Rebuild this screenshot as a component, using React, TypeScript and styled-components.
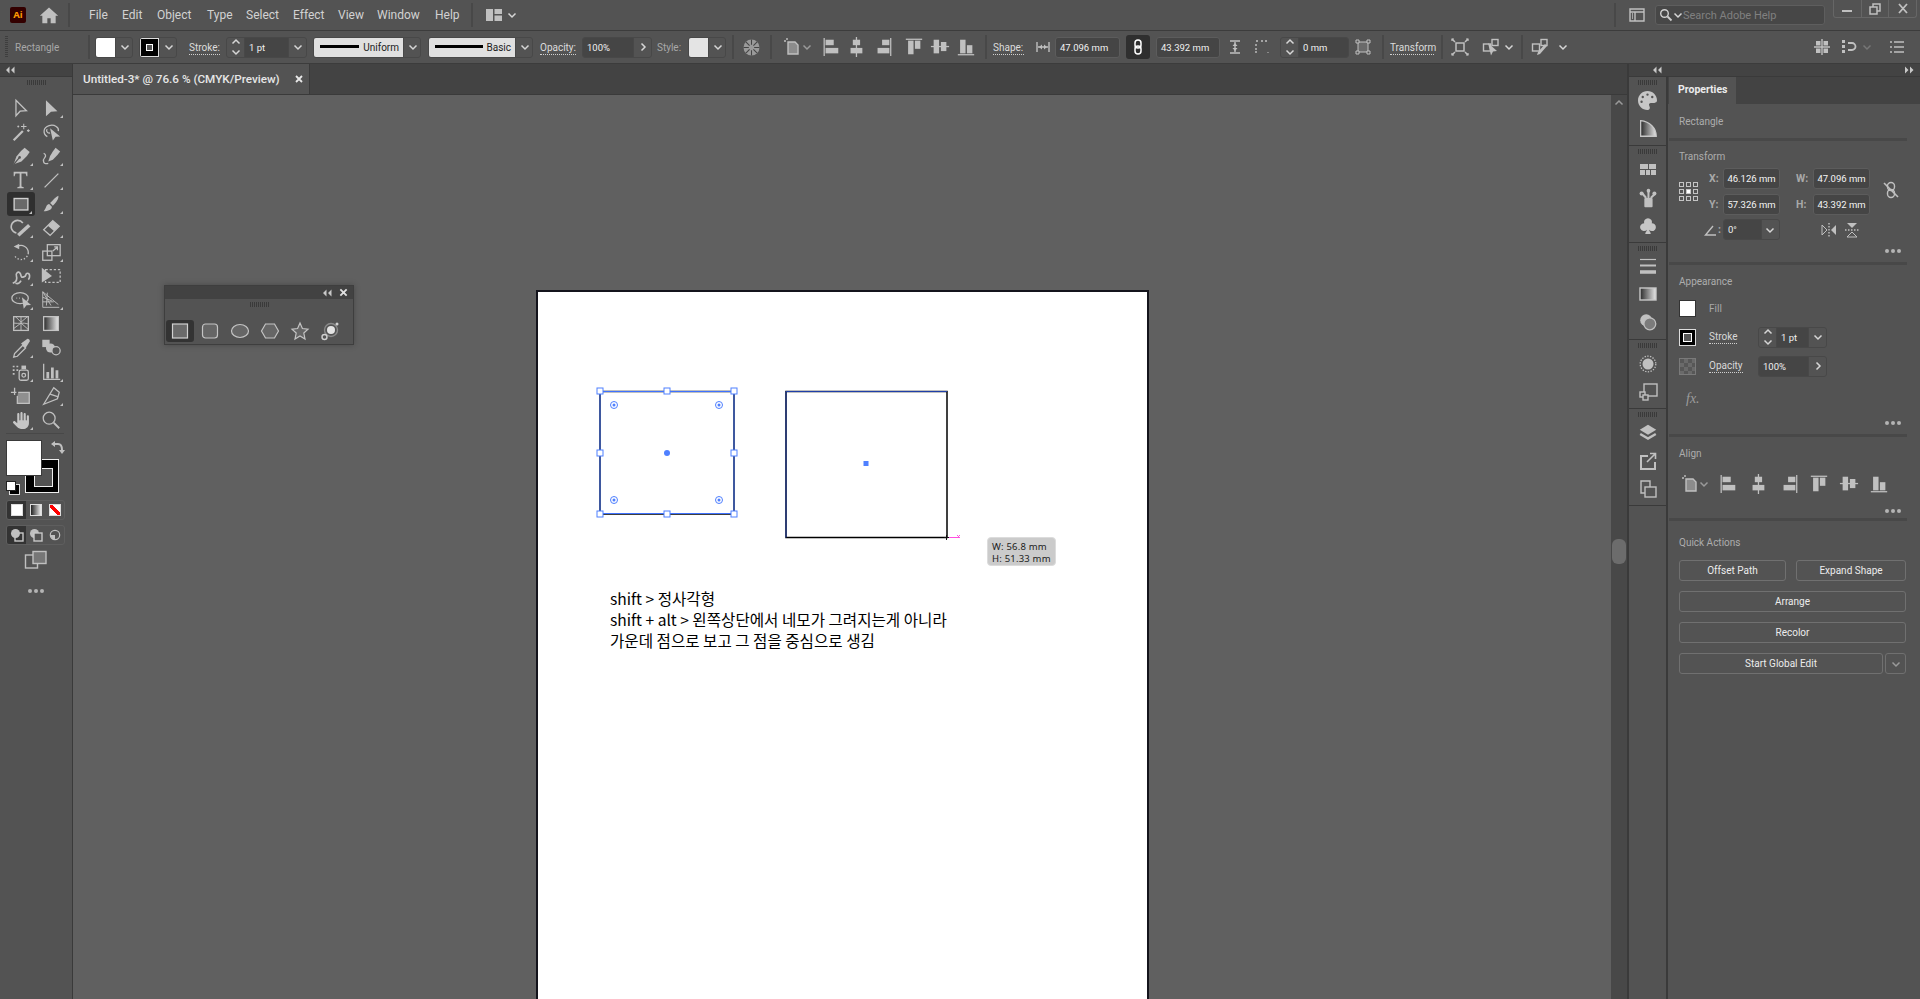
import React from "react";
import styled, { createGlobalStyle, css } from "styled-components";
import { FaHand, FaPalette } from "react-icons/fa6";
import { BsSuitClubFill } from "react-icons/bs";

const Global = createGlobalStyle`
  html, body { margin: 0; height: 999px; overflow: hidden; background: #535353; }
  #root { height: 999px; }
  * { box-sizing: border-box; }
`;

type Off = { $ml?: number };
const offset = css<Off>`margin-left: ${(p) => p.$ml ?? 0}px;`;

const Shell = styled.div`
  width: 1920px; height: 999px; display: flex; flex-direction: column;
  font-family: Roboto, "Noto Sans", "Liberation Sans", sans-serif; color: #c8c8c8; background: #535353; overflow: hidden;
`;

/* ---------- glyph ---------- */
const Glyph = styled.svg<{ $c?: string }>`
  display: block; flex: none; fill: none; stroke: currentColor; stroke-width: 1.4; color: ${(p) => p.$c ?? "#c0c0c0"};
`;
const Ico = ({ s = 24, vb = "0 0 24 24", c, children }: { s?: number; vb?: string; c?: string; children: React.ReactNode }) => (
  <Glyph width={s} height={s} viewBox={vb} $c={c}>{children}</Glyph>
);
const F = { fill: "currentColor", stroke: "none" } as const;

const Chevron = ({ c = "#d6d6d6", up, right }: { c?: string; up?: boolean; right?: boolean }) => (
  <Glyph width="10" height="10" viewBox="0 0 10 10" $c={c} style={{ strokeWidth: 1.5 }}>
    <path d={up ? "M1.5 6.5 5 3l3.5 3.5" : right ? "M3.5 1.5 7 5 3.5 8.5" : "M1.5 3.5 5 7l3.5-3.5"} />
  </Glyph>
);
const DoubleArrow = ({ right }: { right?: boolean }) => (
  <Ico s={10} vb="0 0 10 8" c="#c8c8c8">
    <path d={right ? "M1 .5 4.500 4 1 7.500zM6 .5 9.500 4 6 7.500z" : "M4.500.5 1 4l3.500 3.500zM9.500.5 6 4l3.500 3.500z"} {...F} />
  </Ico>
);

/* ---------- menu bar ---------- */
const MenuBar = styled.div`
  height: 31px; flex: none; display: flex; align-items: center; background: #535353; border-bottom: 1px solid #3c3c3c;
  position: relative;
`;
const AiLogo = styled.div`
  width: 16px; height: 16px; margin-left: 10px; background: #330000; border-radius: 2px; color: #ff9a00;
  font: 700 9.5px/16px "Noto Sans", sans-serif; text-align: center; flex: none;
`;
const HomeSlot = styled.div<Off>`${offset} width: 20px; flex: none;`;
const VBar = styled.div<Off & { $h?: number }>`
  ${offset} width: 2px; height: ${(p) => p.$h ?? 24}px; background: #484848; flex: none;
`;
const MenuList = styled.div`margin-left: 19px; display: flex; flex: none;`;
const MenuItem = styled.div<{ $w: number }>`
  width: ${(p) => p.$w}px; flex: none; font-size: 12px; color: #d2d2d2; white-space: nowrap; line-height: 16px;
`;
const IconSlot = styled.div<Off & { $w?: number }>`
  ${offset} width: ${(p) => p.$w ?? 16}px; flex: none; display: flex; align-items: center; justify-content: center;
`;
const SearchBox = styled.div<Off>`
  ${offset} width: 170px; height: 20px; flex: none; background: #474747; border: 1px solid #5e5e5e; border-radius: 3px;
  display: flex; align-items: center; gap: 0; padding-left: 3px; font-size: 11px; color: #808080; white-space: nowrap;
`;
const WindowButtons = styled.div`
  position: absolute; right: 3px; top: 0; width: 84px; height: 18px; display: flex;
  border: 1px solid #666; border-top: 0; border-radius: 0 0 3px 3px;
`;
const WindowButton = styled.div<{ $sep?: boolean }>`
  flex: 1; display: flex; align-items: center; justify-content: center;
  ${(p) => p.$sep && "border-left: 1px solid #666;"}
`;

/* ---------- control bar ---------- */
const ControlBar = styled.div`
  height: 33px; flex: none; display: flex; align-items: center; background: #535353; border-bottom: 1px solid #3c3c3c;
`;
const Grip = styled.div<Off>`
  ${offset} width: 3px; height: 22px; flex: none;
  background: repeating-linear-gradient(to bottom, #3e3e3e 0 1px, transparent 1px 2px);
`;
const PlainLabel = styled.div<Off & { $w: number }>`
  ${offset} width: ${(p) => p.$w}px; flex: none; font-size: 10px; color: #a8a8a8; white-space: nowrap; padding-top: 1px;
`;
const DottedLabel = styled.div<Off & { $w?: number; $muted?: boolean }>`
  ${offset} ${(p) => p.$w ? `width: ${p.$w}px;` : ""} flex: none; font-size: 10px; line-height: 13px; color: ${(p) => p.$muted ? "#a8a8a8" : "#dcdcdc"}; white-space: nowrap; margin-top: 1px;
  ${(p) => !p.$muted && "border-bottom: 1px dotted #d0d0d0;"}
`;
const Combo = styled.div<Off & { $w: number }>`
  ${offset} width: ${(p) => p.$w}px; height: 21px; flex: none; display: flex; border: 1px solid #484848; border-radius: 3px; overflow: hidden;
`;
const ChevCell = styled.div<{ $w?: number }>`
  width: ${(p) => p.$w ?? 18}px; flex: none; display: flex; align-items: center; justify-content: center;
  border-left: 1px solid #484848;
`;
const StepCell = styled.div`
  width: 18px; flex: none; display: flex; flex-direction: column; align-items: center; justify-content: center;
  border-right: 1px solid #484848; gap: 0;
`;
const ValueCell = styled.div`
  flex: 1; min-width: 0; background: #454545; color: #f0f0f0; font-size: 9.5px; line-height: 19px; padding-left: 4px; white-space: nowrap;
`;
const Swatch = styled.div<{ $bg?: string; $w?: number }>`
  width: ${(p) => p.$w ?? 19}px; flex: none; background: ${(p) => p.$bg ?? "#fff"};
`;
const StrokeSwatch = styled.div`
  width: 19px; flex: none; background: #000; border: 1px solid #ddd; display: flex; align-items: center; justify-content: center;
`;
const StrokeInner = styled.div`
  width: 7px; height: 7px; border: 1.5px solid #fff; background: #555;
`;
const LinePreview = styled.div<{ $w: number; $t: number }>`
  width: ${(p) => p.$w}px; flex: none; background: #e0e0e0; display: flex; align-items: center; padding: 0 4px 0 6px; gap: 4px;
  color: #1c1c1c; font-size: 10px; white-space: nowrap;
  &::before { content: ""; flex: 1; height: ${(p) => p.$t}px; background: #000; margin-top: -1px; }
`;
const FieldBox = styled.div<Off & { $w: number }>`
  ${offset} width: ${(p) => p.$w}px; height: 21px; flex: none; background: #454545; border: 1px solid #5c5c5c; border-radius: 3px;
  font-size: 9.5px; line-height: 19px; color: #f0f0f0; padding-left: 4px; white-space: nowrap;
`;
const LinkButton = styled.div<Off>`
  ${offset} width: 24px; height: 24px; flex: none; background: #2f2f2f; border-radius: 3px; display: flex; align-items: center; justify-content: center;
`;
const RightGroup = styled.div`margin-left: auto; padding-right: 15px; display: flex; align-items: center;`;

/* ---------- workspace ---------- */
const Workspace = styled.div`flex: 1; min-height: 0; display: flex;`;
const CollapseStrip = styled.div`
  height: 13px; flex: none; background: #434343; border-bottom: 1px solid #3a3a3a; display: flex; align-items: center; padding: 0 6px 0 5px;
  justify-content: space-between;
`;
const DockArrow = styled.div`margin-left: 18px;`;
const ToolsColumn = styled.div`
  width: 73px; flex: none; display: flex; flex-direction: column; border-right: 1px solid #3a3a3a;
`;
const GripRow = styled.div<{ $h?: number }>`
  height: ${(p) => p.$h ?? 19}px; flex: none; display: flex; justify-content: center; padding-top: 3px;
  &::before { content: ""; width: 19px; height: 5px; background: repeating-linear-gradient(to right, #3a3a3a 0 1px, transparent 1px 2px); }
`;
const ToolGrid = styled.div`
  display: grid; grid-template-columns: 30px 30px; grid-auto-rows: 24px; padding-left: 6px;
`;
const Tool = styled.div<{ $active?: boolean; $corner?: boolean }>`
  position: relative; display: flex; align-items: center; justify-content: center; border-radius: 3px;
  ${(p) => p.$active && "background: #2f2f2f; width: 28px; margin-left: 1px;"}
  ${(p) => p.$corner && `&::after { content: ""; position: absolute; right: 3px; bottom: 2px; border-left: 3px solid transparent; border-bottom: 3px solid #c0c0c0; }`}
`;
const ToolSep = styled.div`height: 1px; background: #484848; margin: 1px 8px 6px 6px; flex: none;`;
const ColorWell = styled.div`position: relative; height: 54px; flex: none;`;
const WellStroke = styled.div`
  position: absolute; left: 25px; top: 19px; width: 34px; height: 34px; background: #000; border: 1px solid #eee;
  &::after { content: ""; position: absolute; left: 8px; top: 8px; width: 17px; height: 17px; border: 1px solid #eee; background: #535353; }
`;
const WellFill = styled.div`
  position: absolute; left: 6px; top: 0; width: 36px; height: 36px; background: #fff; border: 1px solid #3a3a3a; z-index: 1;
`;
const WellSwap = styled.div`position: absolute; left: 49px; top: 0; color: #c8c8c8;`;
const WellDefault = styled.div`
  position: absolute; left: 6px; top: 41px; width: 12px; height: 12px;
  &::before { content: ""; position: absolute; left: 3px; top: 3px; width: 9px; height: 9px; background: #000; border: 1px solid #ddd; }
  &::after { content: ""; position: absolute; left: 0; top: 0; width: 8px; height: 8px; background: #fff; border: 1px solid #222; }
`;
const ModeRow = styled.div<{ $mt: number }>`
  margin: ${(p) => p.$mt}px 0 0 6px; width: 59px; height: 20px; flex: none; display: flex; border: 1px solid #5e5e5e; border-radius: 3px; overflow: hidden;
`;
const ModeCell = styled.div<{ $on?: boolean }>`
  flex: 1; display: flex; align-items: center; justify-content: center; ${(p) => p.$on && "background: #333;"}
`;
const ModeSwatch = styled.div<{ $bg: string }>`
  width: 12px; height: 12px; border: 1px solid #ddd; background: ${(p) => p.$bg};
`;
const ScreenButton = styled.div`margin-top: 3px; height: 22px; flex: none; display: flex; justify-content: center;`;
const DotsCenter = styled.div`margin-top: 16px; height: 10px; display: flex; justify-content: center; gap: 2px; align-items: center; flex: none;`;
const Dot = styled.span`width: 4px; height: 4px; border-radius: 50%; background: #b4b4b4;`;

const Center = styled.div`flex: none; width: 1556px; display: flex; flex-direction: column; border-right: 2px solid #3a3a3a;`;
const TabBar = styled.div`height: 31px; flex: none; background: #434343; display: flex; border-bottom: 1px solid #3a3a3a;`;
const DocTab = styled.div`
  width: 237px; background: #535353; display: flex; align-items: center; padding: 0 5px 0 10px; justify-content: space-between;
  font-size: 11.7px; font-weight: 500; color: #e6e6e6; white-space: nowrap; border-right: 1px solid #3a3a3a;
`;
const CanvasRow = styled.div`flex: 1; min-height: 0; display: flex;`;
const Canvas = styled.div`flex: 1; position: relative; background: #606060; overflow: hidden;`;
const ScrollColumn = styled.div`
  width: 16px; flex: none; background: #484848; display: flex; flex-direction: column; align-items: center; padding-top: 3px;
`;
const ScrollThumb = styled.div`margin-top: 431px; width: 14px; height: 25px; border-radius: 6px; background: #6c6c6c;`;

/* floating palette */
const FloatPanel = styled.div`
  position: absolute; left: 91px; top: 190px; width: 190px; height: 60px; background: #535353; border: 1px solid #3e3e3e;
  box-shadow: 0 0 6px rgba(0,0,0,.25); display: flex; flex-direction: column;
`;
const FloatHead = styled.div`
  height: 13px; background: #424242; display: flex; justify-content: flex-end; align-items: center; gap: 7px; padding-right: 5px; flex: none;
`;
const FloatIcons = styled.div`display: flex; align-items: center; height: 22px; margin-top: 1px;`;
const FloatTool = styled.div<{ $on?: boolean }>`
  width: 30px; height: 22px; display: flex; align-items: center; justify-content: center; border-radius: 3px;
  ${(p) => p.$on && "background: #333; width: 28px; margin-left: 1px; margin-right: 1px;"}
`;

/* artboard */
const Artboard = styled.div`
  position: absolute; left: 463px; top: 195px; width: 613px; height: 760px; background: #fff; border: 2px solid #14141c; border-bottom: 0;
`;
const ArtDrawing = styled.svg`position: absolute; left: 0; top: 0; width: 609px; height: 320px;`;
const ArtText = styled.div`
  position: absolute; left: 72px; top: 296px; font: 400 15.6px/21px "Noto Sans CJK KR", "Noto Sans", sans-serif; color: #000; white-space: nowrap;
`;
const SizeTip = styled.div`
  position: absolute; left: 449px; top: 245px; width: 69px; height: 29px; background: #cbcbcb; border-radius: 4px; border: 1px solid #dcdcdc;
  font: 9.5px/11.5px "Noto Sans", sans-serif; color: #1c1c1c; padding: 3px 0 0 4px; white-space: nowrap; letter-spacing: .2px;
`;

/* dock */
const Dock = styled.div`width: 39px; flex: none; display: flex; flex-direction: column; border-right: 2px solid #3a3a3a;`;
const DockGroup = styled.div<{ $h: number }>`
  height: ${(p) => p.$h}px; flex: none; display: flex; flex-direction: column; align-items: center; border-bottom: 1px solid #3a3a3a; gap: 0;
`;
const DockGrip = styled.div<{ $h: number }>`
  height: ${(p) => p.$h}px; flex: none; width: 100%; display: flex; justify-content: center; padding-top: 3px;
  &::before { content: ""; width: 19px; height: 5px; background: repeating-linear-gradient(to right, #3a3a3a 0 1px, transparent 1px 2px); }
`;
const DockIcon = styled.div`height: 28px; flex: none; display: flex; align-items: center; justify-content: center;`;

/* properties */
const RightColumn = styled.div`flex: none; width: 291px; display: flex; flex-direction: column;`;
const RightBody = styled.div`flex: 1; min-height: 0; display: flex;`;
const Props = styled.div`flex: 1; min-width: 0; display: flex; flex-direction: column;`;
const PropsTabs = styled.div`height: 27px; flex: none; background: #434343; display: flex;`;
const PropsTab = styled.div`
  width: 67px; background: #535353; font-size: 10.5px; font-weight: 700; color: #ececec; padding-left: 9px; line-height: 25px; margin-left: 1px;
`;
const Section = styled.div<{ $h: number; $pt?: number }>`
  height: ${(p) => p.$h}px; flex: none; padding: ${(p) => p.$pt ?? 9}px 0 0 11px; position: relative;
`;
const SectionSep = styled.div`height: 3px; width: 238px; margin-left: 1px; background: #484848; flex: none;`;
const Title = styled.div`font-size: 10px; line-height: 14px; color: #adadad; white-space: nowrap;`;
const TransformRow = styled.div`display: flex; margin-top: 4px; align-items: flex-start;`;
const RefCol = styled.div`width: 30px; flex: none; padding-top: 14px;`;
const RefGrid = styled.div`
  width: 19px; height: 19px; display: grid; grid-template-columns: repeat(3, 5px); grid-auto-rows: 5px; gap: 2px;
`;
const RefCell = styled.span<{ $on?: boolean }>`border: 1px solid #c4c4c4; background: ${(p) => p.$on ? "#fff" : "transparent"};`;
const FieldGrid = styled.div`
  display: grid; grid-template-columns: 14px 57px 16px 17px 57px; grid-auto-rows: 21px; row-gap: 5px; align-items: center;
`;
const FieldTag = styled.div`font-size: 10.5px; color: #a9a9a9; font-weight: 700;`;
const PropField = styled.div`
  height: 21px; background: #454545; border: 1px solid #5c5c5c; border-radius: 3px; color: #f4f4f4; font-size: 9.5px; line-height: 19px; text-align: center; white-space: nowrap;
`;
const Blank = styled.div``;
const UnlinkSlot = styled.div`margin: 13px 0 0 12px;`;
const AngleRow = styled.div`display: flex; align-items: center; margin: 4px 0 0 25px; height: 21px;`;
const FlipSlot = styled.div<Off>`${offset} flex: none;`;
const DotsEnd = styled.div<{ $mt: number }>`
  display: flex; gap: 2px; margin: ${(p) => p.$mt}px 0 0 206px; width: 16px; height: 4px;
`;
const SmallDot = styled.span`width: 4px; height: 4px; border-radius: 50%; background: #b4b4b4; flex: none;`;
const AppRow = styled.div<{ $mt: number }>`display: flex; align-items: center; margin-top: ${(p) => p.$mt}px; height: 20px;`;
const AppSwatch = styled.div`
  width: 17px; height: 17px; flex: none; background: #fff; border: 1px solid #333;
`;
const AppStroke = styled.div`
  width: 17px; height: 17px; flex: none; background: #000; border: 1px solid #ddd; display: flex; align-items: center; justify-content: center;
`;
const AppStrokeInner = styled.div`width: 9px; height: 9px; border: 1px solid #fff; background: #555;`;
const Checker = styled.div`
  width: 17px; height: 17px; flex: none; border: 1px solid #7a7a7a;
  background: repeating-conic-gradient(#6a6a6a 0 25%, #575757 0 50%) 0 0 / 8px 8px;
`;
const AppLabel = styled.div`width: 49px; margin-left: 13px; flex: none; font-size: 10px; color: #a9a9a9;`;
const AppDotted = styled.span`display: inline-block; font-size: 10px; line-height: 12px; color: #d8d8d8; border-bottom: 1px dotted #d0d0d0;`;
const FxMark = styled.div`
  margin: 13px 0 0 7px; height: 20px; font: italic 14px/20px "Liberation Serif", serif; color: #9c9c9c;
`;
const AlignRow = styled.div`display: flex; align-items: center; margin-top: 13px; height: 20px;`;
const ActionRow = styled.div<{ $mt?: number }>`display: flex; gap: 10px; margin-top: ${(p) => p.$mt ?? 10}px;`;
const ActionBtn = styled.div<{ $w: number }>`
  width: ${(p) => p.$w}px; height: 21px; flex: none; border: 1px solid #707070; border-radius: 3px; color: #ececec; font-size: 10px; line-height: 19px; text-align: center; white-space: nowrap;
`;
const ActionSplit = styled.div`
  width: 21px; height: 21px; margin-left: -8px; flex: none; border: 1px solid #707070; border-radius: 3px; display: flex; align-items: center; justify-content: center;
`;

/* ---------- drawings ---------- */
const gradientDef = (id: string) => (
  <defs>
    <linearGradient id={id} x1="0" x2="1" y1="0" y2="0">
      <stop offset="0" stopColor="#2a2a2a" />
      <stop offset="1" stopColor="#e8e8e8" />
    </linearGradient>
  </defs>
);

const alignShapes: Record<string, React.ReactNode> = {
  left: <><path d="M2.5 1v20" /><rect x="4" y="3" width="9" height="6" {...F} /><rect x="4" y="12" width="14" height="6" {...F} /></>,
  hcenter: <><path d="M10.5 0v22" /><rect x="6.5" y="3" width="8" height="6" {...F} /><rect x="4" y="12" width="13" height="6" {...F} /></>,
  right: <><path d="M18.5 1v20" /><rect x="9" y="3" width="8" height="6" {...F} /><rect x="4" y="12" width="13" height="6" {...F} /></>,
  top: <><path d="M1 2.5h18" /><rect x="3.5" y="4" width="6" height="15" {...F} /><rect x="11" y="4" width="6" height="9" {...F} /></>,
  vcenter: <><path d="M0 10.5h20" /><rect x="3" y="3" width="6" height="15" {...F} /><rect x="11" y="5.5" width="6" height="10" {...F} /></>,
  bottom: <><path d="M1 19.5h18" /><rect x="3.5" y="3" width="6" height="15" {...F} /><rect x="11" y="9" width="6" height="9" {...F} /></>,
};
const AlignIcon = ({ k }: { k: string }) => <Ico s={20} vb="0 0 20 22">{alignShapes[k]}</Ico>;
const AlignToIcon = () => (
  <Ico s={18} vb="0 0 18 18">
    <path d="M4 4h7l3 3v9H4z" fill="#8c8c8c" />
    <path d="M0 3h2M3 0v2" />
  </Ico>
);

const tools: { key: string; corner?: boolean; active?: boolean; node: React.ReactNode }[] = [
  { key: "sel", node: <path d="M6.5 3.5 18 15l-7 .5-4.5 5z" /> },
  { key: "dir", corner: true, node: <path d="M6.5 3.5 19 15.5l-7 .5-5.500 5z" {...F} /> },
  { key: "wand", node: <><path d="M4 21 14 11" strokeWidth="2.4" /><path d="M15 3v6M12 6h6M20 9v3M18.500 10.500h3M9 5v2M8 6h2" strokeWidth="1.1" /></> },
  { key: "lasso", node: <><path d="M8 17C3 14 3 7 10 5c6-1.500 11 2 10 6" /><path d="M8 9c-2 1 0 5 3 4" /><path d="m11 8 11 9-5 .3-3 4z" {...F} /></> },
  { key: "pen", corner: true, node: <><path d="m16 3 5.500 4.500-3 4.500-6 6-8.500 3 3-8.500 5-6z" {...F} /><path d="M4.500 20.500 10 14" stroke="#535353" /><circle cx="10.500" cy="13.500" r="1.400" fill="#535353" stroke="none" /></> },
  { key: "curv", corner: true, node: <><path d="m17 3 5 4-3 4-5 5-5 2 2-6 3-5z" {...F} /><path d="M9 20C3 22 3 16 5 14s1-4-1-5" /></> },
  { key: "text", corner: true, node: <path d="M4 3h15v5h-1l-1-3h-4.500v14l2.500 1v1H8v-1l2.500-1V5H6L5 8H4z" {...F} /> },
  { key: "line", corner: true, node: <path d="M5 20 20 5" /> },
  { key: "rect", corner: true, active: true, node: <rect x="4.500" y="6" width="15" height="12.500" fill="#696969" stroke="#cfcfcf" strokeWidth="1.5" /> },
  { key: "brush", corner: true, node: <><path d="M20 3c1 3-3 8-6 11l-3-3c3-3 6-7 9-8z" {...F} /><path d="M10 12c-3 0-3 4-6 8 5 0 9-2 9-5z" {...F} /></> },
  { key: "shaper", corner: true, node: <><path d="M14 6.500A7 7 0 1 0 7 17.500" strokeWidth="1.800" /><path d="m9 20 12-11" strokeWidth="3.800" /></> },
  { key: "eraser", corner: true, node: <><path d="m14 4 7 6-10 10-7-6z" /><path d="m14 4 7 6-5.500 5.500-7-6z" {...F} /></> },
  { key: "rotate", corner: true, node: <><path d="M8 6a8 8 0 0 1 12 7" /><path d="M20 13a8 8 0 0 1-15 3" strokeDasharray="1.5 2" /><path d="m4 6 6-3v6z" {...F} /></> },
  { key: "scale", corner: true, node: <><rect x="3" y="11" width="10" height="10" /><rect x="8" y="4" width="14" height="12" /><path d="m14 11 5-4.500M15.500 6.500h3.500v3.500" /></> },
  { key: "warp", corner: true, node: <><path d="M3 20c5-2 5-5 4-8s2-6 4-3 0 5 4 4 1-4 4-4 3 5 1 7" strokeWidth="1.800" /><path d="M6 20c3 1 5-1 6-3" strokeWidth="1.800" /></> },
  { key: "free", node: <><rect x="6" y="5" width="16" height="14" strokeDasharray="2.500 2" /><path d="m2 3 11 9-11 7z" {...F} /></> },
  { key: "builder", corner: true, node: <><ellipse cx="11" cy="10" rx="9" ry="6" /><path d="M7 10h.8M10 10h.8" strokeWidth="1.500" /><path d="m13 9 10 8.500-5 .3-3 3.700z" {...F} /></> },
  { key: "persp", corner: true, node: <><path d="M3 3v17h18M3 3l17 14M3 3l9 15M3 9l10 4M3 14h12M8 4l-1 14" strokeWidth="1" /></> },
  { key: "mesh", node: <><rect x="4" y="4" width="16" height="15" /><path d="M4 11c5 1 11-1 16 1M12 4v15M4 17l8-6 8 7M6 4l6 6 7-6" strokeWidth="1" /></> },
  { key: "grad", node: <>{gradientDef("g1")}<rect x="4" y="4" width="16" height="15" fill="url(#g1)" stroke="#c4c4c4" /></> },
  { key: "drop", corner: true, node: <><path d="m4 22 1-4 9-9 3 3-9 9z" /><path d="m12 7 7-5c2 0 3 2 2.500 3L17 12z" {...F} /></> },
  { key: "blend", node: <><rect x="2.500" y="3" width="8" height="8" {...F} /><circle cx="11.500" cy="12" r="5" {...F} /><circle cx="17.500" cy="15" r="4.500" fill="#535353" /></> },
  { key: "spray", corner: true, node: <><rect x="10" y="10" width="10" height="11" rx="2" /><circle cx="15" cy="15.500" r="2" /><rect x="12.500" y="5" width="5" height="4" {...F} /><path d="M3 6h2M7 6h2M3 10h2M7 10h2M3 14h2" strokeWidth="1.800" /></> },
  { key: "graph", corner: true, node: <><path d="M4 3v17h18" /><path d="M7 12h3v7H7zM12 7h3v12h-3zM17 10h3v9h-3z" {...F} /></> },
  { key: "board", node: <><path d="M1 8h6M5 3v8" /><path d="M9 8h12v12H8v-8" fill="#8f8f8f" /></> },
  { key: "slice", corner: true, node: <><path d="M4 21 15 3l6 5-2 7z" /><path d="M11 10l9 3" /></> },
  { key: "hand", corner: true, node: null },
  { key: "zoom", node: <><circle cx="10" cy="10" r="6.500" /><path d="m15 15 6 6" strokeWidth="2" /></> },
];

const dockGroups: { h: number; grip: number; icons: React.ReactNode[] }[] = [
  { h: 69, grip: 9, icons: [
    <FaPalette key="a" size={19} color="#c6c6c6" />,
    <Ico key="b" s={22}>{gradientDef("g2")}<path d="M4 4v17h17C21 12 14 5 4 4z" fill="url(#g2)" stroke="#c8c8c8" /></Ico>,
  ] },
  { h: 97, grip: 10, icons: [
    <Ico key="a" s={20} vb="0 0 20 20"><path d="M2 4h8v5H2zM11 4h7v5h-7zM2 10h5v5H2zM8 10h4v5H8zM13 10h5v5h-5z" {...F} /></Ico>,
    <Ico key="b" s={22}><rect x="8" y="12" width="9" height="10" rx="1" {...F} /><path d="M10 12 5 6M12.500 12V3M15 12l5-5" strokeWidth="2.200" /><circle cx="5" cy="7" r="2.200" {...F} /><circle cx="12.500" cy="4" r="2" {...F} /><circle cx="19" cy="7" r="2.200" {...F} /></Ico>,
    <BsSuitClubFill key="c" size={18} color="#c6c6c6" />,
  ] },
  { h: 97, grip: 9, icons: [
    <Ico key="a" s={20} vb="0 0 20 20"><path d="M2 3.500h16" strokeWidth="1.200" /><path d="M2 9.500h16" strokeWidth="2" /><path d="M2 16h16" strokeWidth="3.500" /></Ico>,
    <Ico key="b" s={20} vb="0 0 20 20">{gradientDef("g3")}<rect x="2" y="4" width="16" height="12" fill="url(#g3)" stroke="#c8c8c8" /></Ico>,
    <Ico key="c" s={22}><circle cx="10" cy="10" r="6.500" {...F} /><circle cx="14" cy="14" r="6.500" fill="#7c7c7c" stroke="#c0c0c0" /></Ico>,
  ] },
  { h: 69, grip: 10, icons: [
    <Ico key="a" s={22}><circle cx="12" cy="12" r="6" {...F} /><circle cx="12" cy="12" r="8.500" strokeDasharray="1.500 1.500" /></Ico>,
    <Ico key="b" s={20} vb="0 0 20 20"><rect x="6" y="2" width="13" height="12" /><rect x="2" y="10" width="5" height="5" fill="#535353" /><rect x="5" y="13" width="5" height="5" fill="#535353" /></Ico>,
  ] },
  { h: 97, grip: 10, icons: [
    <Ico key="a" s={22}><path d="m12 3 9 5.500-9 5.500-9-5.500z" {...F} /><path d="m3.500 13 8.500 5 8.500-5" strokeWidth="2.600" /></Ico>,
    <Ico key="b" s={20} vb="0 0 20 20"><path d="M17 11v7H3V5h7" strokeWidth="2" /><path d="m9 11 8-8M12 2.500h5.500V8" strokeWidth="1.600" /></Ico>,
    <Ico key="c" s={20} vb="0 0 20 20"><path d="M3 2h9v12H3z" /><rect x="7" y="8" width="11" height="10" fill="#535353" /></Ico>,
  ] },
];

const menus: [string, number][] = [["File", 33], ["Edit", 35], ["Object", 50], ["Type", 39], ["Select", 47], ["Effect", 45], ["View", 39], ["Window", 58], ["Help", 36]];

const StepUpDown = () => (
  <StepCell><Chevron up /><Chevron /></StepCell>
);

const handles: [number, number][] = [[600, 391], [667, 391], [734, 391], [600, 453], [734, 453], [600, 514], [667, 514], [734, 514]];
const widgets: [number, number][] = [[614, 405], [719, 405], [614, 500], [719, 500]];

const ShapeIcon = ({ n }: { n: number }) => {
  const s = { fill: "#666", stroke: "#c4c4c4", strokeWidth: 1.2 };
  return (
    <Ico s={20} vb="0 0 20 20">
      {n === 0 && <rect x="2.500" y="3" width="15" height="14" fill="#6a6a6a" stroke="#d0d0d0" strokeWidth="1.200" />}
      {n === 1 && <rect x="2.500" y="3" width="15" height="14" rx="3" {...s} />}
      {n === 2 && <ellipse cx="10" cy="10" rx="8.500" ry="6.500" {...s} />}
      {n === 3 && <path d="M5.500 3h9l4 7-4 7h-9l-4-7z" {...s} />}
      {n === 4 && <path d="m10 2 2.400 5.500 5.600.6-4.200 3.900 1.200 6L10 15l-5 3 1.200-6L2 8.100l5.600-.6z" {...s} />}
      {n === 5 && <><circle cx="11" cy="9" r="6.500" stroke="#8a8a8a" /><circle cx="11" cy="9" r="4" fill="#e4e4e4" stroke="none" /><circle cx="4.500" cy="16" r="2.500" fill="#535353" stroke="#d0d0d0" /><circle cx="17" cy="3" r="1.500" fill="#d0d0d0" stroke="none" /></>}
    </Ico>
  );
};

export default function App() {
  return (
    <Shell>
      <Global />
      <MenuBar>
        <AiLogo>Ai</AiLogo>
        <HomeSlot $ml={13}>
          <Ico s={20}><path d="M12 3 23 13h-3v9h-6v-6h-4v6H4v-9H1z" {...F} /></Ico>
        </HomeSlot>
        <VBar $ml={9} />
        <MenuList>
          {menus.map(([m, w]) => <MenuItem key={m} $w={w}>{m}</MenuItem>)}
        </MenuList>
        <VBar />
        <IconSlot $ml={12} $w={18}>
          <Ico s={18} vb="0 0 18 18"><path d="M1 3h7v12H1zM9.500 3H17v5H9.500zM9.500 9.500H17V15H9.500z" {...F} /></Ico>
        </IconSlot>
        <IconSlot $ml={4} $w={10}><Chevron /></IconSlot>
        <VBar $ml={1097} />
        <IconSlot $ml={12} $w={18}>
          <Ico s={18} vb="0 0 18 18"><path d="M2 3h14v12H2zM2 6h14M7 6v9" /><path d="M4 8h1M4 10h1M4 12h1" /></Ico>
        </IconSlot>
        <SearchBox $ml={9}>
          <Ico s={14} vb="0 0 14 14" c="#d0d0d0"><circle cx="5.500" cy="5.500" r="3.800" /><path d="m8.500 8.500 4 4" strokeWidth="1.800" /></Ico>
          <Chevron />
          Search Adobe Help
        </SearchBox>
        <WindowButtons>
          <WindowButton><Ico s={12} vb="0 0 12 12"><path d="M1 8h10" strokeWidth="2" /></Ico></WindowButton>
          <WindowButton $sep><Ico s={12} vb="0 0 12 12"><path d="M1 4h7v7H1zM4 4V1h7v7H8" strokeWidth="1.500" /></Ico></WindowButton>
          <WindowButton $sep><Ico s={12} vb="0 0 12 12"><path d="m2 1 8 9M10 1l-8 9" strokeWidth="1.800" /></Ico></WindowButton>
        </WindowButtons>
      </MenuBar>

      <ControlBar>
        <Grip $ml={5} />
        <PlainLabel $ml={7} $w={44}>Rectangle</PlainLabel>
        <VBar $ml={29} />
        <Combo $ml={5} $w={38}><Swatch /><ChevCell><Chevron /></ChevCell></Combo>
        <Combo $ml={6} $w={38}><StrokeSwatch><StrokeInner /></StrokeSwatch><ChevCell><Chevron /></ChevCell></Combo>
        <DottedLabel $ml={12} $w={31}>Stroke:</DottedLabel>
        <Combo $ml={6} $w={81}><StepUpDown /><ValueCell>1 pt</ValueCell><ChevCell><Chevron /></ChevCell></Combo>
        <Combo $ml={6} $w={108}><LinePreview $w={89} $t={3}>Uniform</LinePreview><ChevCell><Chevron /></ChevCell></Combo>
        <Combo $ml={7} $w={105}><LinePreview $w={86} $t={3}>Basic</LinePreview><ChevCell><Chevron /></ChevCell></Combo>
        <DottedLabel $ml={7} $w={36}>Opacity:</DottedLabel>
        <Combo $ml={6} $w={70}><ValueCell>100%</ValueCell><ChevCell><Chevron right /></ChevCell></Combo>
        <DottedLabel $ml={5} $w={25} $muted>Style:</DottedLabel>
        <Combo $ml={6} $w={38}><Swatch $bg="#e4e4e4" /><ChevCell><Chevron /></ChevCell></Combo>
        <VBar $ml={6} />
        <IconSlot $ml={9}>
          <Ico s={17} vb="0 0 16 16"><circle cx="8" cy="8" r="7.500" fill="#9a9a9a" stroke="none" /><path d="M8 .5v5M8 10.500v5M.5 8h5M10.500 8h5M2.700 2.700l3.500 3.500M9.800 9.800l3.500 3.500M13.300 2.700 9.800 6.200M6.200 9.800l-3.500 3.500" stroke="#444" strokeWidth="1" /></Ico>
        </IconSlot>
        <VBar $ml={11} />
        <IconSlot $ml={12} $w={18}><AlignToIcon /></IconSlot>
        <IconSlot $w={10}><Chevron c="#9a9a9a" /></IconSlot>
        <IconSlot $ml={9} $w={20}><AlignIcon k="left" /></IconSlot>
        <IconSlot $ml={5} $w={20}><AlignIcon k="hcenter" /></IconSlot>
        <IconSlot $ml={7} $w={20}><AlignIcon k="right" /></IconSlot>
        <IconSlot $ml={11} $w={20}><AlignIcon k="top" /></IconSlot>
        <IconSlot $ml={6} $w={20}><AlignIcon k="vcenter" /></IconSlot>
        <IconSlot $ml={6} $w={20}><AlignIcon k="bottom" /></IconSlot>
        <VBar $ml={9} />
        <DottedLabel $ml={6} $w={31}>Shape:</DottedLabel>
        <IconSlot $ml={11}><Ico s={14} vb="0 0 14 14"><path d="M1 2v10M13 2v10M2 7h10" /><path d="m3 7 3-2.500v5zM11 7 8 4.500v5z" {...F} /></Ico></IconSlot>
        <FieldBox $ml={4} $w={65}>47.096 mm</FieldBox>
        <LinkButton $ml={6}>
          <Ico s={16} vb="0 0 16 16" c="#fff"><rect x="5" y="1" width="6" height="8" rx="3" strokeWidth="1.500" /><rect x="5" y="7" width="6" height="8" rx="3" strokeWidth="1.500" /></Ico>
        </LinkButton>
        <FieldBox $ml={6} $w={64}>43.392 mm</FieldBox>
        <IconSlot $ml={8} $w={14}><Ico s={14} vb="0 0 14 14"><path d="M2 1h10M2 13h10M7 2v10" /><path d="m7 3 2.500 3h-5zM7 11 4.500 8h5z" {...F} /></Ico></IconSlot>
        <IconSlot $ml={12}><Ico s={16} vb="0 0 16 16"><path d="M2 2h2M7 2h2M2 5v2M2 9v2M2 12v2" strokeWidth="1.400" /><path d="M11 2h2" strokeWidth="1.400" /><path d="m14 13 1 1h-2z" {...F} /></Ico></IconSlot>
        <Combo $ml={10} $w={69}><StepUpDown /><ValueCell>0 mm</ValueCell></Combo>
        <IconSlot $ml={6}><Ico s={16} vb="0 0 16 16"><path d="M3 3h10v10H3z" fill="#6a6a6a" strokeWidth="1" /><path d="M1 1h3v3H1zM12 1h3v3h-3zM1 12h3v3H1zM12 12h3v3h-3z" fill="#535353" strokeWidth="1" /></Ico></IconSlot>
        <VBar $ml={11} />
        <DottedLabel $ml={6} $w={44}>Transform</DottedLabel>
        <VBar $ml={7} />
        <IconSlot $ml={8} $w={18}><Ico s={18} vb="0 0 18 18"><rect x="5" y="5" width="8" height="8" strokeWidth="1.500" /><path d="m1 1 3 3M17 1l-3 3M1 17l3-3M17 17l-3-3" strokeWidth="1.500" /><path d="M1 3V1h2M15 1h2v2M1 15v2h2M15 17h2v-2" strokeWidth="1.200" /></Ico></IconSlot>
        <IconSlot $ml={13} $w={18}><Ico s={18} vb="0 0 18 18"><rect x="1.500" y="6" width="7" height="7" /><rect x="10" y="1.500" width="6" height="6" /><path d="m6 5 9 8-4 .5-2 4z" {...F} /></Ico></IconSlot>
        <IconSlot $ml={4} $w={10}><Chevron /></IconSlot>
        <VBar $ml={7} />
        <IconSlot $ml={8} $w={18}><Ico s={18} vb="0 0 18 18"><rect x="1.500" y="6" width="7" height="7" /><rect x="10" y="1.500" width="6" height="6" /><path d="m14 6 2 2-7 8-3 1 1-3z" {...F} /></Ico></IconSlot>
        <IconSlot $ml={9} $w={10}><Chevron /></IconSlot>
        <RightGroup>
          <IconSlot><Ico s={16} vb="0 0 16 16"><path d="M8 0v16M0 8h16" /><path d="M2 2h4.500v4.500H2zM9.500 2H14v4.500H9.500zM2 9.500h4.500V14H2zM9.500 9.500H14V14H9.500z" {...F} /></Ico></IconSlot>
          <IconSlot $ml={11}><Ico s={16} vb="0 0 16 16"><path d="M1 1h3v3H1zM1 6h3v3H1zM1 11h3v3H1z" {...F} /><path d="M7 4h4a3.500 3.500 0 0 1 0 7H7" strokeWidth="1.800" /></Ico></IconSlot>
          <IconSlot $ml={5} $w={10}><Chevron c="#777" /></IconSlot>
          <IconSlot $ml={17}><Ico s={16} vb="0 0 16 16"><path d="M5 3h10M5 8h10M5 13h10M1 3h2M1 8h2M1 13h2" strokeWidth="1.500" /></Ico></IconSlot>
        </RightGroup>
      </ControlBar>

      <Workspace>
        <ToolsColumn>
          <CollapseStrip><DoubleArrow /></CollapseStrip>
          <GripRow />
          <ToolGrid>
            {tools.map((t) => (
              <Tool key={t.key} $active={t.active} $corner={t.corner}>
                {t.key === "hand" ? <FaHand size={17} color="#c6c6c6" /> : <Ico s={22}>{t.node}</Ico>}
              </Tool>
            ))}
          </ToolGrid>
          <ToolSep />
          <ColorWell>
            <WellFill />
            <WellStroke />
            <WellSwap><Ico s={16} vb="0 0 16 16"><path d="M4 4h5c3 0 4 2 4 6" strokeWidth="2" /><path d="m6 1-4 3 4 3zM10 10h6l-3 4z" {...F} /></Ico></WellSwap>
            <WellDefault />
          </ColorWell>
          <ModeRow $mt={6}>
            <ModeCell $on><ModeSwatch $bg="#fff" /></ModeCell>
            <ModeCell><ModeSwatch $bg="linear-gradient(to right,#222,#eee)" /></ModeCell>
            <ModeCell><ModeSwatch $bg="linear-gradient(to top right,#fff 38%,#f00 38% 62%,#fff 62%)" /></ModeCell>
          </ModeRow>
          <ModeRow $mt={5}>
            <ModeCell $on><Ico s={14} vb="0 0 14 14"><rect x="5" y="5" width="8" height="8" stroke="#c8c8c8" /><circle cx="5.500" cy="5.500" r="4.500" fill="#c0c0c0" stroke="none" /></Ico></ModeCell>
            <ModeCell><Ico s={14} vb="0 0 14 14"><circle cx="5.500" cy="5.500" r="4.500" fill="#c0c0c0" stroke="none" /><rect x="5" y="5" width="8" height="8" fill="#535353" stroke="#c8c8c8" /></Ico></ModeCell>
            <ModeCell><Ico s={12} vb="0 0 14 14"><circle cx="7" cy="7" r="5.500" /><path d="M7 7h5.500A5.500 5.500 0 0 0 7 1.500z" {...F} transform="rotate(180 7 7)" /></Ico></ModeCell>
          </ModeRow>
          <ScreenButton>
            <Ico s={24} vb="0 0 24 24"><rect x="1.500" y="7" width="12" height="13" /><rect x="9" y="3.500" width="13" height="12" fill="#777" /></Ico>
          </ScreenButton>
          <DotsCenter><Dot /><Dot /><Dot /></DotsCenter>
        </ToolsColumn>

        <Center>
          <TabBar>
            <DocTab>
              <span>Untitled-3* @ 76.6 % (CMYK/Preview)</span>
              <Ico s={10} vb="0 0 10 10" c="#e8e8e8"><path d="m2 2 6 6M8 2 2 8" strokeWidth="1.800" /></Ico>
            </DocTab>
          </TabBar>
          <CanvasRow>
            <Canvas>
              <FloatPanel>
                <FloatHead>
                  <DoubleArrow />
                  <Ico s={9} vb="0 0 10 10" c="#e0e0e0"><path d="m1.500 1.500 7 7M8.500 1.500l-7 7" strokeWidth="2" /></Ico>
                </FloatHead>
                <GripRow $h={20} />
                <FloatIcons>
                  {[0, 1, 2, 3, 4, 5].map((n) => (
                    <FloatTool key={n} $on={n === 0}><ShapeIcon n={n} /></FloatTool>
                  ))}
                </FloatIcons>
              </FloatPanel>
              <Artboard>
                <ArtDrawing viewBox="538 292 609 320">
                  <rect x="600" y="391.500" width="134" height="122.500" fill="none" stroke="#000" strokeWidth="1.500" />
                  <rect x="600" y="391.500" width="134" height="122" fill="none" stroke="#3f72ff" strokeWidth="1" />
                  {handles.map(([x, y]) => (
                    <rect key={`${x}-${y}`} x={x - 3} y={y - 3} width="6" height="6" fill="#fff" stroke="#4f80ff" />
                  ))}
                  <circle cx="667" cy="453" r="3" fill="#4f80ff" />
                  {widgets.map(([x, y]) => (
                    <g key={`${x}-${y}`}>
                      <circle cx={x} cy={y} r="3.500" fill="#fff" stroke="#4f80ff" />
                      <circle cx={x} cy={y} r="1.500" fill="#4f80ff" />
                    </g>
                  ))}
                  <rect x="786" y="391.500" width="161" height="146" fill="none" stroke="#000" strokeWidth="1.500" />
                  <path d="M786 537.500V391.500H947" fill="none" stroke="#1f3fa8" strokeWidth="1" />
                  <rect x="863.500" y="461" width="5" height="5" fill="#4f80ff" />
                  <path d="M944 537.500h5M946.500 535v5" stroke="#111" strokeWidth="1" fill="none" />
                  <path d="M949 537.500h10M957 535l3 3M960 535l-3 3" stroke="#ff4fe0" strokeWidth="1" fill="none" />
                </ArtDrawing>
                <SizeTip>W: 56.8 mm<br />H: 51.33 mm</SizeTip>
                <ArtText>
                  shift &gt; 정사각형<br />
                  shift + alt &gt; 왼쪽상단에서 네모가 그려지는게 아니라<br />
                  가운데 점으로 보고 그 점을 중심으로 생김
                </ArtText>
              </Artboard>
            </Canvas>
            <ScrollColumn>
              <Chevron up c="#9a9a9a" />
              <ScrollThumb />
            </ScrollColumn>
          </CanvasRow>
        </Center>

        <RightColumn>
          <CollapseStrip>
            <DockArrow><DoubleArrow /></DockArrow>
            <DoubleArrow right />
          </CollapseStrip>
          <RightBody>
            <Dock>
              {dockGroups.map((g, i) => (
                <DockGroup key={i} $h={g.h}>
                  <DockGrip $h={g.grip} />
                  {g.icons.map((ic, j) => <DockIcon key={j}>{ic}</DockIcon>)}
                </DockGroup>
              ))}
            </Dock>
            <Props>
              <PropsTabs><PropsTab>Properties</PropsTab></PropsTabs>
              <Section $h={34} $pt={11}><Title>Rectangle</Title></Section>
              <SectionSep />
              <Section $h={121}>
                <Title>Transform</Title>
                <TransformRow>
                  <RefCol>
                    <RefGrid>
                      {[0, 1, 2, 3, 4, 5, 6, 7, 8].map((n) => <RefCell key={n} $on={n === 4} />)}
                    </RefGrid>
                  </RefCol>
                  <FieldGrid>
                    <FieldTag>X:</FieldTag><PropField>46.126 mm</PropField><Blank /><FieldTag>W:</FieldTag><PropField>47.096 mm</PropField>
                    <FieldTag>Y:</FieldTag><PropField>57.326 mm</PropField><Blank /><FieldTag>H:</FieldTag><PropField>43.392 mm</PropField>
                  </FieldGrid>
                  <UnlinkSlot>
                    <Ico s={18} vb="0 0 18 18"><rect x="5.500" y="1.500" width="7" height="8" rx="3.500" /><rect x="5.500" y="8.500" width="7" height="8" rx="3.500" /><path d="m2 2 14 14" strokeWidth="1.600" /></Ico>
                  </UnlinkSlot>
                </TransformRow>
                <AngleRow>
                  <Ico s={14} vb="0 0 14 14"><path d="M12 12H1.500L9 3" /></Ico>
                  <FieldTag>:</FieldTag>
                  <Combo $ml={2} $w={57}><ValueCell>0°</ValueCell><ChevCell><Chevron /></ChevCell></Combo>
                  <FlipSlot $ml={41}><Ico s={16} vb="0 0 16 16"><path d="M8 1v14" strokeDasharray="1.500 1.500" /><path d="M1 3v10l5-5z" strokeWidth="1" /><path d="M15 3v10l-5-5z" {...F} /></Ico></FlipSlot>
                  <FlipSlot $ml={7}><Ico s={16} vb="0 0 16 16"><path d="M1 8h14" strokeDasharray="1.500 1.500" /><path d="M3 1h10L8 6z" {...F} /><path d="M3 15h10l-5-5z" strokeWidth="1" /></Ico></FlipSlot>
                </AngleRow>
                <DotsEnd $mt={9}><SmallDot /><SmallDot /><SmallDot /></DotsEnd>
              </Section>
              <SectionSep />
              <Section $h={169} $pt={10}>
                <Title>Appearance</Title>
                <AppRow $mt={9}><AppSwatch /><AppLabel>Fill</AppLabel></AppRow>
                <AppRow $mt={9}>
                  <AppStroke><AppStrokeInner /></AppStroke>
                  <AppLabel><AppDotted>Stroke</AppDotted></AppLabel>
                  <Combo $w={69}><StepUpDown /><ValueCell>1 pt</ValueCell><ChevCell><Chevron /></ChevCell></Combo>
                </AppRow>
                <AppRow $mt={9}>
                  <Checker />
                  <AppLabel><AppDotted>Opacity</AppDotted></AppLabel>
                  <Combo $w={69}><ValueCell>100%</ValueCell><ChevCell><Chevron right /></ChevCell></Combo>
                </AppRow>
                <FxMark>fx.</FxMark>
                <DotsEnd $mt={12}><SmallDot /><SmallDot /><SmallDot /></DotsEnd>
              </Section>
              <SectionSep />
              <Section $h={81} $pt={10}>
                <Title>Align</Title>
                <AlignRow>
                  <IconSlot $ml={3} $w={18}><AlignToIcon /></IconSlot>
                  <IconSlot $ml={-1} $w={10}><Chevron c="#9a9a9a" /></IconSlot>
                  <IconSlot $ml={9} $w={20}><AlignIcon k="left" /></IconSlot>
                  <IconSlot $ml={10} $w={20}><AlignIcon k="hcenter" /></IconSlot>
                  <IconSlot $ml={11} $w={20}><AlignIcon k="right" /></IconSlot>
                  <IconSlot $ml={10} $w={20}><AlignIcon k="top" /></IconSlot>
                  <IconSlot $ml={10} $w={20}><AlignIcon k="vcenter" /></IconSlot>
                  <IconSlot $ml={10} $w={20}><AlignIcon k="bottom" /></IconSlot>
                </AlignRow>
                <DotsEnd $mt={15}><SmallDot /><SmallDot /><SmallDot /></DotsEnd>
              </Section>
              <SectionSep />
              <Section $h={200} $pt={15}>
                <Title>Quick Actions</Title>
                <ActionRow $mt={10}>
                  <ActionBtn $w={107}>Offset Path</ActionBtn>
                  <ActionBtn $w={110}>Expand Shape</ActionBtn>
                </ActionRow>
                <ActionRow><ActionBtn $w={227}>Arrange</ActionBtn></ActionRow>
                <ActionRow><ActionBtn $w={227}>Recolor</ActionBtn></ActionRow>
                <ActionRow>
                  <ActionBtn $w={204}>Start Global Edit</ActionBtn>
                  <ActionSplit><Chevron c="#9a9a9a" /></ActionSplit>
                </ActionRow>
              </Section>
            </Props>
          </RightBody>
        </RightColumn>
      </Workspace>
    </Shell>
  );
}
